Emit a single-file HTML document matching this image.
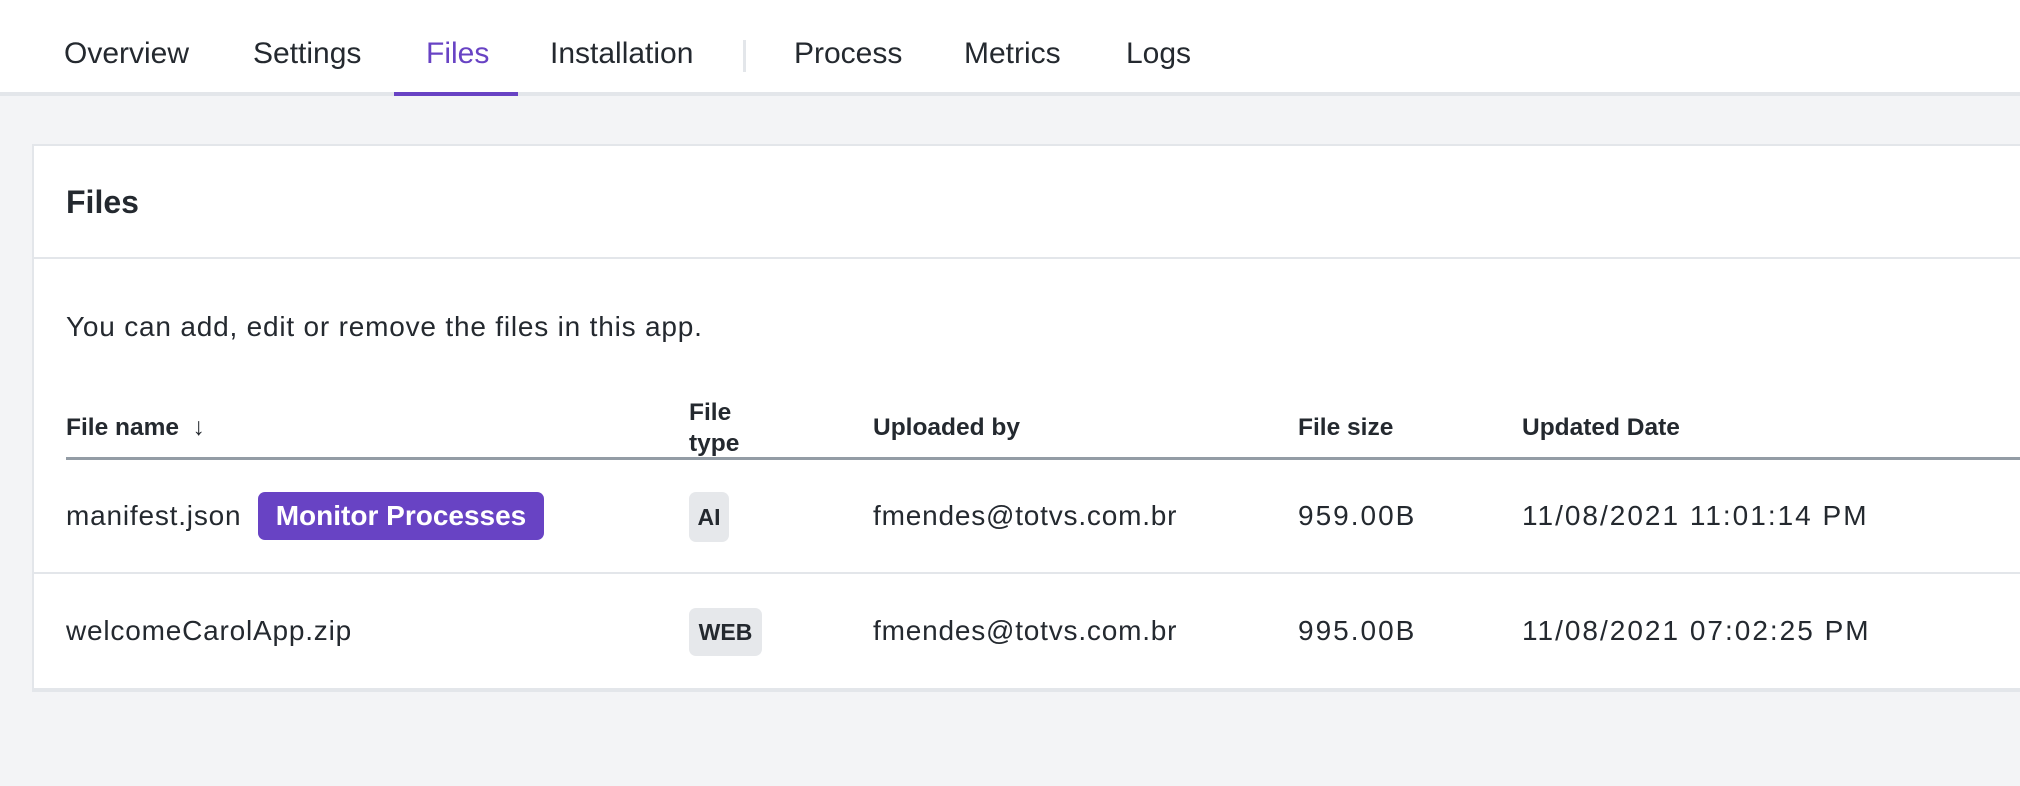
<!DOCTYPE html>
<html><head><meta charset="utf-8"><style>
*{margin:0;padding:0;box-sizing:border-box}
body{width:2020px;height:786px;background:#f3f4f6;font-family:"Liberation Sans",sans-serif;color:#1f2933;position:relative;overflow:hidden}
.nav{position:absolute;left:0;top:0;width:2020px;height:96px;background:#fff;border-bottom:4px solid #e3e6ea}
.t{position:absolute;top:37px;font-size:30px;color:#24292f;white-space:nowrap}
.sep{position:absolute;left:743px;top:40px;width:3px;height:32px;background:#e3e6ea}
.ul{position:absolute;left:394px;top:92px;width:124px;height:4px;background:#6843c4}
.card{position:absolute;left:32px;top:144px;width:2000px;height:548px;background:#fff;border:2px solid #e3e6ea;border-bottom:4px solid #e3e6ea}
.a{position:absolute;white-space:nowrap}
.h{font-size:24.5px;font-weight:bold;color:#24292f}
.c{font-size:28px;color:#24292f;letter-spacing:0.8px}
.d{letter-spacing:2px}
.b{position:absolute;background:#e6e8eb;border-radius:7px;font-weight:bold;font-size:23px;color:#24292f;text-align:center}
</style></head><body>
<div class="nav">
<div class="t" style="left:64px">Overview</div>
<div class="t" style="left:253px">Settings</div>
<div class="t" style="left:426px;color:#6843c4">Files</div>
<div class="t" style="left:550px">Installation</div>
<div class="sep"></div>
<div class="t" style="left:794px">Process</div>
<div class="t" style="left:964px">Metrics</div>
<div class="t" style="left:1126px">Logs</div>
<div class="ul"></div>
</div>
<div class="card"></div>
<div class="a" style="left:66px;top:184px;font-size:32px;font-weight:bold;color:#24292f">Files</div>
<div style="position:absolute;left:34px;top:257px;width:1990px;height:2px;background:#e3e6ea"></div>
<div class="a c" style="left:66px;top:311px">You can add, edit or remove the files in this app.</div>
<div class="a h" style="left:66px;top:414px">File name&nbsp; ↓</div>
<div class="a h" style="left:689px;top:397px;line-height:31px">File<br>type</div>
<div class="a h" style="left:873px;top:414px">Uploaded by</div>
<div class="a h" style="left:1298px;top:414px">File size</div>
<div class="a h" style="left:1522px;top:414px">Updated Date</div>
<div style="position:absolute;left:66px;top:457px;width:1960px;height:3px;background:#939ca5"></div>
<div class="a c" style="left:66px;top:500px">manifest.json</div>
<div class="a" style="left:258px;top:492px;width:286px;height:48px;background:#6843c4;border-radius:7px;color:#fff;font-weight:bold;font-size:28px;line-height:48px;text-align:center">Monitor Processes</div>
<div class="b" style="left:689px;top:492px;width:40px;height:50px;line-height:50px">AI</div>
<div class="a c" style="left:873px;top:500px">fmendes@totvs.com.br</div>
<div class="a c d" style="left:1298px;top:500px">959.00B</div>
<div class="a c d" style="left:1522px;top:500px">11/08/2021 11:01:14 PM</div>
<div style="position:absolute;left:34px;top:572px;width:1990px;height:2px;background:#e3e6ea"></div>
<div class="a c" style="left:66px;top:615px">welcomeCarolApp.zip</div>
<div class="b" style="left:689px;top:608px;width:73px;height:48px;line-height:48px">WEB</div>
<div class="a c" style="left:873px;top:615px">fmendes@totvs.com.br</div>
<div class="a c d" style="left:1298px;top:615px">995.00B</div>
<div class="a c d" style="left:1522px;top:615px">11/08/2021 07:02:25 PM</div>
</body></html>
